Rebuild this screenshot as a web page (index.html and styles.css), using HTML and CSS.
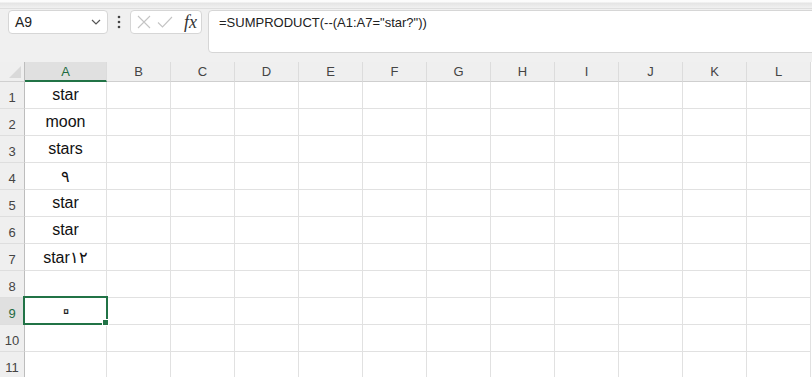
FILE: index.html
```html
<!DOCTYPE html>
<html lang="en">
<head>
<meta charset="UTF-8">
<meta name="viewport" content="width=device-width, initial-scale=1.0">
<title>Sheet</title>
<link rel="stylesheet" href="styles.css">
</head>
<body>

<div class="ribbon-edge"></div>

<!-- formula bar -->
<div class="formula-bar">
	<div class="name-box">
		<span>A9</span>
		<svg width="10" height="6" viewBox="0 0 10 6"><path d="M1 1 L5 5 L9 1" fill="none" stroke="#555" stroke-width="1.2"/></svg>
	</div>
	<div class="more">
		<svg width="4" height="14" viewBox="0 0 4 14"><circle cx="2" cy="2" r="1.3" fill="#444"/><circle cx="2" cy="7" r="1.3" fill="#444"/><circle cx="2" cy="12" r="1.3" fill="#444"/></svg>
	</div>
	<div class="fx-box">
		<svg width="14" height="14" viewBox="0 0 14 14"><path d="M1 1 L13 13 M13 1 L1 13" stroke="#c4c4c4" stroke-width="1.1"/></svg>
		<svg width="16" height="12" viewBox="0 0 16 12"><path d="M1 6.5 L5.5 11 L15 1" fill="none" stroke="#c4c4c4" stroke-width="1.1"/></svg>
		<span class="fx">fx</span>
	</div>
	<div class="formula-input">=SUMPRODUCT(--(A1:A7="star?"))</div>
</div>

<!-- sheet -->
<div class="sheet">
	<div class="corner"><div class="tri"></div></div>
	<div class="col-head active">A</div>
	<div class="col-head">B</div>
	<div class="col-head">C</div>
	<div class="col-head">D</div>
	<div class="col-head">E</div>
	<div class="col-head">F</div>
	<div class="col-head">G</div>
	<div class="col-head">H</div>
	<div class="col-head">I</div>
	<div class="col-head">J</div>
	<div class="col-head">K</div>
	<div class="col-head">L</div>
</div>

<div class="selection"><div class="handle"></div></div>

<script>
	// fill the rows of the grid
	var values = ["star", "moon", "stars", "٩", "star", "star", "star١٢", "", "٠", "", ""];
	var sheet = document.querySelector(".sheet");
	values.forEach(function (v, i) {
		var rh = document.createElement("div");
		rh.className = "row-head" + (i == 8 ? " active" : "");
		rh.textContent = i + 1;
		sheet.appendChild(rh);
		for (var c = 0; c < 12; c++) {
			var cell = document.createElement("div");
			cell.className = "cell";
			if (c == 0 && v == "٠") {
				cell.innerHTML = '<span class="zero">' + v + '</span>';
			} else if (c == 0) {
				cell.textContent = v;
			}
			sheet.appendChild(cell);
		}
	});
</script>
</body>
</html>
```

FILE: styles.css
```css
body {
	margin: 0;
	background-color: #f0f0f0;
	font-family: "Liberation Sans", Arial, sans-serif;
	overflow: hidden;
	position: relative;
}
.ribbon-edge {
	height: 8px;
	background: linear-gradient(#fbfbfb 0, #fbfbfb 2px, #e4e4e4 3px, #f0f0f0 8px);
	border-bottom: 1px solid #dedede;
	margin: 0 0 1px 0;
}
.formula-bar {
	display: flex;
	align-items: flex-start;
	padding: 0 0 9px 8px;
	height: 43px;
}
.name-box {
	width: 100px;
	height: 24px;
	box-sizing: border-box;
	background-color: #fff;
	border: 1px solid #d6d6d6;
	border-radius: 4px;
	display: flex;
	align-items: center;
	justify-content: space-between;
	padding: 0 6px 0 6px;
	font-size: 14px;
	color: #222;
}
.more {
	width: 22px;
	height: 24px;
	display: flex;
	align-items: center;
	justify-content: center;
}
.fx-box {
	width: 72px;
	height: 24px;
	box-sizing: border-box;
	background-color: #fff;
	border: 1px solid #d6d6d6;
	border-radius: 4px;
	display: flex;
	align-items: center;
	gap: 6px;
	padding: 0 4px 0 6px;
}
.fx {
	font-family: "Liberation Serif", serif;
	font-style: italic;
	font-size: 18px;
	color: #333;
	margin-left: auto;
	line-height: 1;
}
.formula-input {
	flex: 1;
	margin-left: 6px;
	margin-right: -6px;
	height: 43px;
	box-sizing: border-box;
	background-color: #fff;
	border: 1px solid #d6d6d6;
	border-radius: 4px;
	padding: 4px 10px;
	font-size: 13px;
	line-height: 16px;
	color: #222;
}
.sheet {
	display: grid;
	grid-template-columns: 25px 82px repeat(11, 64px);
	grid-template-rows: 20px;
	grid-auto-rows: 27px;
	background-color: #fff;
}
.corner {
	background-color: #efefef;
	border-right: 1px solid #bdbdbd;
	border-bottom: 1px solid #d0d0d0;
	position: relative;
}
.tri {
	position: absolute;
	right: 3px;
	bottom: 3px;
	width: 0;
	height: 0;
	border-left: 12px solid transparent;
	border-bottom: 12px solid #d9d9d9;
}
.col-head {
	background-color: #efefef;
	border-right: 1px solid #dcdcdc;
	border-bottom: 1px solid #cfcfcf;
	display: flex;
	align-items: center;
	justify-content: center;
	font-size: 13px;
	color: #444;
}
.col-head.active {
	background-color: #e0e0e0;
	border-bottom: 2px solid #217346;
	color: #1e6b41;
}
.row-head {
	background-color: #efefef;
	border-right: 1px solid #bdbdbd;
	border-bottom: 1px solid #dedede;
	display: flex;
	align-items: flex-end;
	justify-content: center;
	padding-bottom: 3px;
	box-sizing: border-box;
	font-size: 13px;
	color: #444;
}
.row-head.active {
	background-color: #e0e0e0;
	color: #1e6b41;
}
.cell {
	border-right: 1px solid #e1e1e1;
	border-bottom: 1px solid #e1e1e1;
	display: flex;
	align-items: center;
	justify-content: center;
	box-sizing: border-box;
	font-size: 16px;
	color: #111;
	white-space: nowrap;
}
.zero {
	font-size: 30px;
	color: transparent;
	-webkit-text-stroke: 1.1px #222;
	line-height: 1;
	margin-top: -2px;
}
.selection {
	position: absolute;
	left: 23px;
	top: 296px;
	width: 81px;
	height: 25px;
	border: 2px solid #217346;
}
.handle {
	position: absolute;
	right: -3px;
	bottom: -3px;
	width: 5px;
	height: 5px;
	background-color: #217346;
	border: 1px solid #fff;
}
```
